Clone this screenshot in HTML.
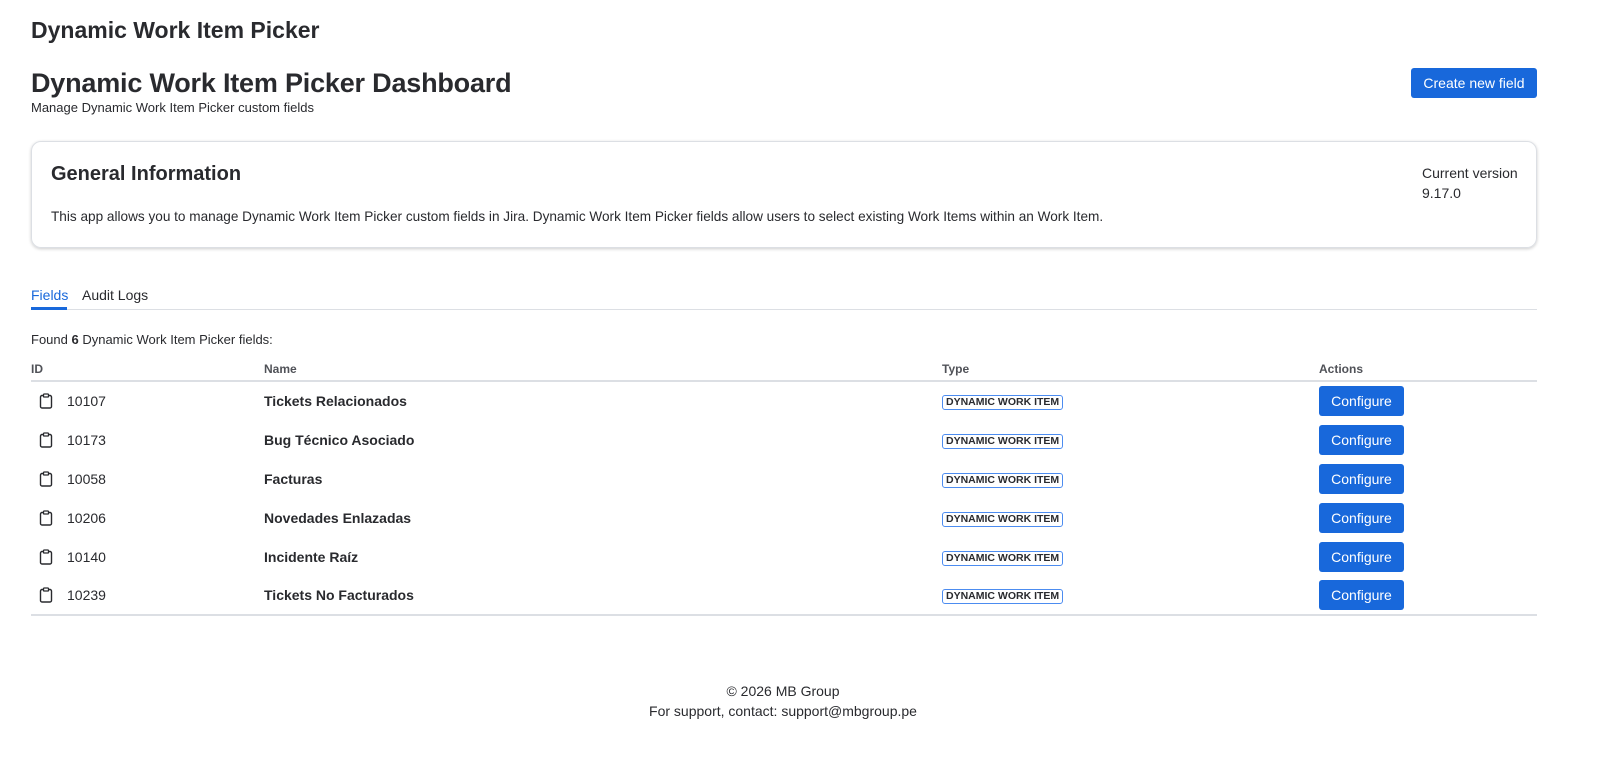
<!DOCTYPE html>
<html><head><meta charset="utf-8"><style>
*{box-sizing:border-box;margin:0;padding:0}
body{width:1612px;height:773px;background:#fff;font-family:"Liberation Sans",sans-serif;color:#292a2e;position:relative;overflow:hidden}
.abs{position:absolute}
.btn{background:#1868db;color:#fff;border-radius:3px;font-size:14px;display:flex;align-items:center;justify-content:center}
.card{left:31px;top:141px;width:1506px;height:107px;border:1px solid #dcdfe4;border-radius:10px;box-shadow:0 1px 3px rgba(0,0,0,.2)}
table{position:absolute;left:31px;top:360px;width:1506px;border-collapse:collapse;font-size:14px}
th{font-size:12px;text-align:left;color:#505258;height:21px;border-bottom:2px solid #dcdfe4;font-weight:bold;vertical-align:top;padding-top:2px}
td{height:39px;vertical-align:middle}
tr:last-child td{border-bottom:2px solid #dcdfe4}
.id{display:flex;align-items:center}
.id svg{margin:0 14px 0 8px}
.lz{display:inline-block;border:1px solid #4c8cf0;border-radius:3px;font-size:10.5px;font-weight:bold;padding:0 3px;line-height:13px}
.cf{width:85px;height:30px}
</style></head><body>
<div class="abs" style="left:31px;top:17px;font-size:23px;font-weight:bold">Dynamic Work Item Picker</div>
<div class="abs" style="left:31px;top:68px;font-size:27px;font-weight:bold;letter-spacing:-0.2px">Dynamic Work Item Picker Dashboard</div>
<div class="abs" style="left:31px;top:100px;font-size:13px">Manage Dynamic Work Item Picker custom fields</div>
<div class="abs btn" style="left:1411px;top:68px;width:126px;height:30px">Create new field</div>
<div class="abs card">
<div class="abs" style="left:19px;top:21px;font-size:20px;font-weight:bold">General Information</div>
<div class="abs" style="left:19px;top:67px;font-size:13.6px">This app allows you to manage Dynamic Work Item Picker custom fields in Jira. Dynamic Work Item Picker fields allow users to select existing Work Items within an Work Item.</div>
<div class="abs" style="left:1390px;top:21px;font-size:14px;line-height:20px">Current version<br>9.17.0</div>
</div>
<div class="abs" style="left:31px;top:287px;font-size:14px;color:#1868db">Fields</div>
<div class="abs" style="left:82px;top:287px;font-size:14px">Audit Logs</div>
<div class="abs" style="left:31px;top:309px;width:1506px;height:1px;background:#dcdfe4"></div>
<div class="abs" style="left:31px;top:307px;width:36px;height:3px;background:#1868db"></div>
<div class="abs" style="left:31px;top:332px;font-size:13px">Found <b>6</b> Dynamic Work Item Picker fields:</div>
<table>
<tr><th style="width:233px">ID</th><th style="width:678px">Name</th><th style="width:377px">Type</th><th>Actions</th></tr>
<tr><td><div class="id"><svg width="14" height="16" viewBox="0 0 14 16"><rect x="1.5" y="2.5" width="11" height="12.5" rx="1.5" fill="none" stroke="#292a2e" stroke-width="1.4"/><rect x="4.5" y="1" width="5" height="3" rx=".8" fill="#fff" stroke="#292a2e" stroke-width="1.3"/></svg>10107</div></td><td><b>Tickets Relacionados</b></td><td><span class="lz">DYNAMIC WORK ITEM</span></td><td><div class="btn cf">Configure</div></td></tr>
<tr><td><div class="id"><svg width="14" height="16" viewBox="0 0 14 16"><rect x="1.5" y="2.5" width="11" height="12.5" rx="1.5" fill="none" stroke="#292a2e" stroke-width="1.4"/><rect x="4.5" y="1" width="5" height="3" rx=".8" fill="#fff" stroke="#292a2e" stroke-width="1.3"/></svg>10173</div></td><td><b>Bug Técnico Asociado</b></td><td><span class="lz">DYNAMIC WORK ITEM</span></td><td><div class="btn cf">Configure</div></td></tr>
<tr><td><div class="id"><svg width="14" height="16" viewBox="0 0 14 16"><rect x="1.5" y="2.5" width="11" height="12.5" rx="1.5" fill="none" stroke="#292a2e" stroke-width="1.4"/><rect x="4.5" y="1" width="5" height="3" rx=".8" fill="#fff" stroke="#292a2e" stroke-width="1.3"/></svg>10058</div></td><td><b>Facturas</b></td><td><span class="lz">DYNAMIC WORK ITEM</span></td><td><div class="btn cf">Configure</div></td></tr>
<tr><td><div class="id"><svg width="14" height="16" viewBox="0 0 14 16"><rect x="1.5" y="2.5" width="11" height="12.5" rx="1.5" fill="none" stroke="#292a2e" stroke-width="1.4"/><rect x="4.5" y="1" width="5" height="3" rx=".8" fill="#fff" stroke="#292a2e" stroke-width="1.3"/></svg>10206</div></td><td><b>Novedades Enlazadas</b></td><td><span class="lz">DYNAMIC WORK ITEM</span></td><td><div class="btn cf">Configure</div></td></tr>
<tr><td><div class="id"><svg width="14" height="16" viewBox="0 0 14 16"><rect x="1.5" y="2.5" width="11" height="12.5" rx="1.5" fill="none" stroke="#292a2e" stroke-width="1.4"/><rect x="4.5" y="1" width="5" height="3" rx=".8" fill="#fff" stroke="#292a2e" stroke-width="1.3"/></svg>10140</div></td><td><b>Incidente Raíz</b></td><td><span class="lz">DYNAMIC WORK ITEM</span></td><td><div class="btn cf">Configure</div></td></tr>
<tr><td><div class="id"><svg width="14" height="16" viewBox="0 0 14 16"><rect x="1.5" y="2.5" width="11" height="12.5" rx="1.5" fill="none" stroke="#292a2e" stroke-width="1.4"/><rect x="4.5" y="1" width="5" height="3" rx=".8" fill="#fff" stroke="#292a2e" stroke-width="1.3"/></svg>10239</div></td><td><b>Tickets No Facturados</b></td><td><span class="lz">DYNAMIC WORK ITEM</span></td><td><div class="btn cf">Configure</div></td></tr>
</table>
<div class="abs" style="left:0;width:1566px;top:681px;text-align:center;font-size:14px;line-height:20px">© 2026 MB Group<br>For support, contact: support@mbgroup.pe</div>
</body></html>
